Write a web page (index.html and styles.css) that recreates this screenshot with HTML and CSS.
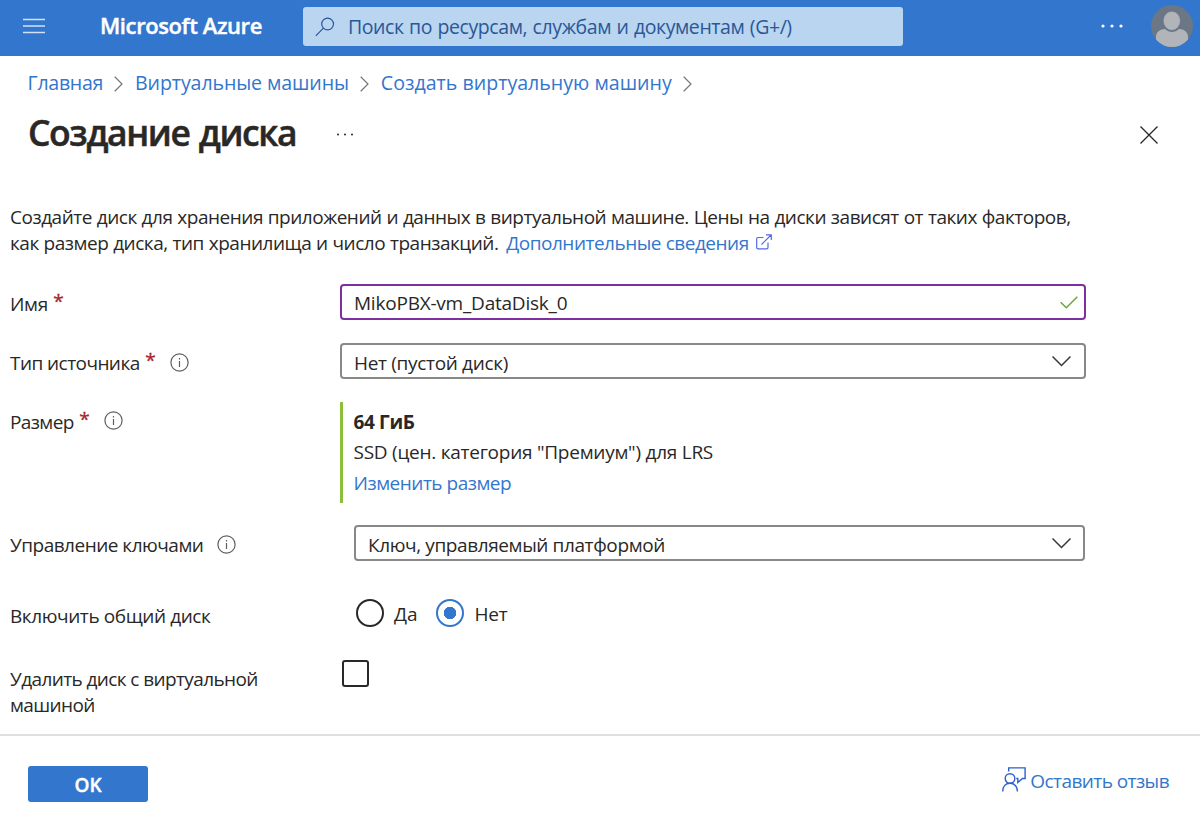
FILE: index.html
```html
<!DOCTYPE html>
<html lang="ru">
<head>
<meta charset="utf-8">
<title>Создание диска - Microsoft Azure</title>
<link rel="stylesheet" href="styles.css">
</head>
<body>
<header class="topbar">
  <svg class="menu-icon" width="22" height="16" viewBox="0 0 22 16"><path d="M0 1.500h22M0 8h22M0 14.500h22"/></svg>
  <span class="brand">Microsoft Azure</span>
  <div class="search">
    <svg class="search-icon" width="20" height="20" viewBox="0 0 20 20"><circle cx="12.600" cy="7" r="5.900"/><path d="M8.400 11.200L.8 18.800"/></svg>
    <span class="search-text">Поиск по ресурсам, службам и документам (G+/)</span>
  </div>
  <svg class="more-icon" width="24" height="4" viewBox="0 0 24 4"><circle cx="3" cy="2" r="1.600"/><circle cx="12" cy="2" r="1.600"/><circle cx="21" cy="2" r="1.600"/></svg>
  <svg class="avatar" width="42" height="42" viewBox="0 0 42 42">
    <clipPath id="avatar-clip"><circle cx="21" cy="21" r="21"/></clipPath>
    <g clip-path="url(#avatar-clip)">
      <path class="avatar-bg" d="M0 0h42v42H0z"/>
      <path class="avatar-fg" d="M5 42V32c0-5 4-8 9-8 2 2 4.500 2.900 7 2.900s5-.9 7-2.900c5 0 9 3 9 8v10z"/>
      <ellipse class="avatar-head" cx="20.800" cy="15.800" rx="8.600" ry="9.500"/>
    </g>
  </svg>
</header>

<nav class="breadcrumbs">
  <a class="crumb-home">Главная</a>
  <svg class="chevron" width="9" height="16" viewBox="0 0 9 16"><path d="M.7.8L8 8 .7 15.200"/></svg>
  <a class="crumb-vms">Виртуальные машины</a>
  <svg class="chevron" width="9" height="16" viewBox="0 0 9 16"><path d="M.7.8L8 8 .7 15.200"/></svg>
  <a class="crumb-create">Создать виртуальную машину</a>
  <svg class="chevron" width="9" height="16" viewBox="0 0 9 16"><path d="M.7.8L8 8 .7 15.200"/></svg>
</nav>

<div class="title-row">
  <h1 class="title">Создание диска</h1>
  <svg class="title-more" width="18" height="3" viewBox="0 0 18 3"><circle cx="2" cy="1.500" r="1"/><circle cx="9" cy="1.500" r="1"/><circle cx="16" cy="1.500" r="1"/></svg>
  <svg class="close" width="18" height="18" viewBox="0 0 18 18"><path d="M.5.5l17 17M17.500.5l-17 17"/></svg>
</div>

<main class="form">
  <p class="intro">Создайте диск для хранения приложений и данных в виртуальной машине. Цены на диски зависят от таких факторов,<br>как размер диска, тип хранилища и число транзакций. <a class="more-link"><span class="link-text">Дополнительные сведения</span><svg class="external" width="16" height="16" viewBox="0 0 16 16"><path d="M7.500 3.500H2A1.300 1.300 0 0 0 .7 4.800v8.700A1.300 1.300 0 0 0 2 14.800h8.700a1.300 1.300 0 0 0 1.300-1.300V8.500M5.500 10.500L15.300.8M10 .8h5.300v5.300"/></svg></a></p>

  <div class="field name">
    <label class="label"><span class="label-text">Имя</span><span class="required">*</span></label>
    <div class="box active"><span class="value">MikoPBX-vm_DataDisk_0</span><svg class="check" width="18" height="13" viewBox="0 0 18 13"><path d="M.7 6.200l5.600 5.600L17.300.7"/></svg></div>
  </div>

  <div class="field source">
    <label class="label"><span class="label-text">Тип источника</span><span class="required">*</span><svg class="info" width="19" height="19" viewBox="0 0 19 19"><circle cx="9.500" cy="9.500" r="8.600"/><path d="M9.500 8v6M9.500 5v1.500"/></svg></label>
    <div class="box"><span class="value">Нет (пустой диск)</span><svg class="arrow" width="19" height="11" viewBox="0 0 19 11"><path d="M.5.5l9 9 9-9"/></svg></div>
  </div>

  <div class="field size">
    <label class="label"><span class="label-text">Размер</span><span class="required">*</span><svg class="info" width="19" height="19" viewBox="0 0 19 19"><circle cx="9.500" cy="9.500" r="8.600"/><path d="M9.500 8v6M9.500 5v1.500"/></svg></label>
    <div class="size-info">
      <strong>64 ГиБ</strong>
      <div class="sku">SSD (цен. категория "Премиум") для LRS</div>
      <a>Изменить размер</a>
    </div>
  </div>

  <div class="field keys">
    <label class="label"><span class="label-text">Управление ключами</span><svg class="info" width="19" height="19" viewBox="0 0 19 19"><circle cx="9.500" cy="9.500" r="8.600"/><path d="M9.500 8v6M9.500 5v1.500"/></svg></label>
    <div class="box"><span class="value">Ключ, управляемый платформой</span><svg class="arrow" width="19" height="11" viewBox="0 0 19 11"><path d="M.5.5l9 9 9-9"/></svg></div>
  </div>

  <div class="field shared">
    <label class="label"><span class="label-text">Включить общий диск</span></label>
    <div class="radios">
      <span class="radio"></span><span class="radio-text">Да</span>
      <span class="radio selected"></span><span class="radio-text">Нет</span>
    </div>
  </div>

  <div class="field remove">
    <label class="label"><span class="label-text">Удалить диск с виртуальной<br>машиной</span></label>
    <span class="checkbox"></span>
  </div>
</main>

<footer class="footer">
  <button class="ok" type="button">OK</button>
  <a class="feedback">
    <svg class="feedback-icon" width="24" height="25" viewBox="0 0 24 25"><circle cx="8" cy="11.500" r="4.800"/><path d="M.7 24.500c0-5 3-8.200 7.300-8.200s7.500 3.200 7.500 8.200M6.700 4.500V.9h16.400v10.600h-2.600l-4.700 4v-4h-1.500"/></svg>
    <span class="feedback-text">Оставить отзыв</span>
  </a>
</footer>
</body>
</html>
```
FILE: styles.css
```css
* { box-sizing: border-box; }
body { margin: 0; width: 1200px; height: 820px; overflow: hidden; background: #fff; color: #292827; font: 19px/26px "Open Sans", "Noto Sans", sans-serif; display: flex; flex-direction: column; }
svg { display: block; flex: none; fill: none; }
a { color: #3376cd; text-decoration: none; }

.topbar { height: 56px; flex: none; display: flex; align-items: center; background: #3376cd; padding: 0 7px 0 23px; }
.menu-icon { margin-top: -4px; stroke: #d3e2f5; stroke-width: 1.5; }
.brand { width: 203px; margin: -6px 0 0 55px; color: #fff; font-size: 22px; font-weight: 600; letter-spacing: -.4px; white-space: nowrap; -webkit-text-stroke: .4px #fff; }
.search { width: 600px; height: 39px; margin-top: -3px; padding-left: 12px; display: flex; align-items: center; gap: 13px; background: #b9d5f0; border-radius: 3px; }
.search-icon { stroke: #2b579a; stroke-width: 1.2; }
.search-text { padding-top: 1px; color: #2b5796; font-size: 19.5px; letter-spacing: -.42px; word-spacing: .8px; }
.more-icon { margin: -4px 0 0 197px; fill: #fff; }
.avatar { margin: -5px 0 0 auto; }
.avatar-bg { fill: #6b7785; }
.avatar-fg { fill: #b1b5ba; }
.avatar-head { fill: #b1b5ba; stroke: #6b7785; stroke-width: .6; }

.breadcrumbs { height: 53px; flex: none; padding-left: 27.5px; display: flex; align-items: center; font-size: 19.6px; white-space: nowrap; }
.crumb-home { letter-spacing: -.3px; }
.crumb-vms { letter-spacing: -.12px; margin-left: 1px; }
.crumb-create { letter-spacing: 0; margin-left: 1px; }
.chevron { margin: 2px 11px 0; stroke: #767676; stroke-width: 1.2; }

.title-row { height: 95px; flex: none; padding: 2px 42px 0 28px; display: flex; align-items: flex-start; }
.title { margin: -3px 0 0; width: 308px; font-size: 35.5px; line-height: 48px; font-weight: 600; letter-spacing: -1.4px; word-spacing: 1.5px; white-space: nowrap; -webkit-text-stroke: .5px #292827; }
.title-more { margin-top: 22px; fill: #292827; }
.close { margin: 15px 0 0 auto; stroke: #292827; stroke-width: 1.3; }

.form { height: 530px; flex: none; padding-left: 10px; }
.intro { margin: 0 0 28px; height: 52px; letter-spacing: -.48px; word-spacing: .4px; white-space: nowrap; }
.more-link { display: inline-flex; margin-left: 3px; }
.link-text { letter-spacing: -.5px; }
.external { margin: 4px 0 0 7px; stroke: #4f6bed; stroke-width: 1.2; }

.field { display: grid; grid-template-columns: 330px 746px; align-items: start; height: 36px; margin-bottom: 23px; }
.label { padding-top: 7px; white-space: nowrap; }
.label .info { display: inline-block; vertical-align: -2px; margin-left: 14px; stroke: #605e5c; stroke-width: 1.2; }
.required { color: #a4262c; margin-left: 5.5px; vertical-align: 3px; line-height: 1; -webkit-text-stroke: .3px #a4262c; }
.box { height: 36px; border: 2px solid #8a8886; border-radius: 4px; padding: 0 12px; display: flex; align-items: center; justify-content: space-between; }
.value { padding-top: 3px; }
.active { border-color: #7e2fa0; padding: 0 6px 0 12px; }
.active .value { padding-top: 2px; letter-spacing: -.22px; }
.check { stroke: #6ba636; stroke-width: 1.5; }
.arrow { margin-top: 1px; stroke: #3b3a39; stroke-width: 1.5; }
.name .label-text { letter-spacing: -.35px; }
.source .box { padding-right: 13px; }
.source .label-text { letter-spacing: -.55px; }
.source .value { letter-spacing: -.32px; }
.size { height: 101px; margin-bottom: 22px; }
.size .label-text { letter-spacing: -.6px; }
.size .info { vertical-align: -1px; }
.size-info { height: 101px; border-left: 3px solid #8cbd3b; padding: 5px 0 0 10.5px; line-height: 30px; }
.size-info strong, .size-info a { display: block; }
.size-info strong { letter-spacing: -.35px; }
.sku { letter-spacing: -.25px; }
.size-info a { letter-spacing: -.49px; padding-top: 1px; }
.keys { margin-bottom: 38px; }
.keys .label-text { letter-spacing: -.5px; }
.keys .value { letter-spacing: -.39px; }
.keys .box { margin: 0 1px 0 14px; }
.shared { height: 28px; margin-bottom: 33px; }
.shared .label { padding-top: 4px; letter-spacing: -.41px; }
.radios { display: flex; align-items: center; padding-left: 16px; }
.radio { width: 28px; height: 28px; border: 2px solid #292827; border-radius: 50%; }
.radio-text { margin: 2px 18px 0 10px; }
.selected { border-color: #3376cd; background: radial-gradient(circle, #3376cd 6px, transparent 6.5px); }
.selected + .radio-text { margin-left: 11px; letter-spacing: -.3px; }
.remove { height: 60px; margin-bottom: 0; }
.remove .label { padding-top: 6px; letter-spacing: -.6px; }
.checkbox { width: 27px; height: 27px; margin-left: 2px; border: 2px solid #292827; border-radius: 3px; }

.footer { height: 86px; flex: none; border-top: 2px solid #e1dfdd; padding: 30px 31px 0 28px; display: flex; justify-content: space-between; align-items: flex-start; }
.ok { width: 120px; height: 36px; border: 0; border-radius: 3px; background: #3376cd; color: #fff; font: 600 19px/36px "Open Sans", sans-serif; padding: 1px 0 0; -webkit-text-stroke: .4px #fff; }
.feedback { display: flex; align-items: flex-start; gap: 4px; letter-spacing: -.56px; }
.feedback-icon { margin-top: 1px; stroke: #2c5fce; stroke-width: 1.4; }
.feedback-text { padding-top: 2px; }
```
